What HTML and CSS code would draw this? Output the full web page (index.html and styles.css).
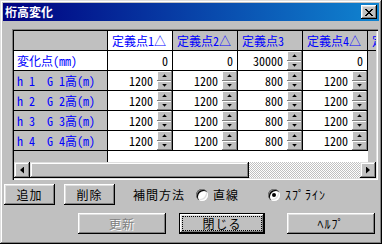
FILE: index.html
```html
<!DOCTYPE html>
<html lang="ja">
<head>
    <meta charset="UTF-8" />
    <title>桁高変化</title>
    <link rel="stylesheet" href="styles.css">
</head>
<body>
<div class="window">
    <div class="titlebar">
        <span class="title">桁高変化</span>
        <span class="close-btn">
            <svg width="8" height="7" viewBox="0 0 8 7"><path d="M0 0h2v1h-2zM6 0h2v1h-2zM1 1h2v1h-2zM5 1h2v1h-2zM2 2h4v1h-4zM3 3h2v1h-2zM2 4h4v1h-4zM1 5h2v1h-2zM5 5h2v1h-2zM0 6h2v1h-2zM6 6h2v1h-2z"/></svg>
        </span>
    </div>

    <div class="grid">
        <div class="grid-view">
            <div class="grow">
                <div class="cell fixed"></div>
                <div class="cell head current">定義点1△</div>
                <div class="cell head">定義点2△</div>
                <div class="cell head">定義点3</div>
                <div class="cell head">定義点4△</div>
                <div class="cell head">定義点5△</div>
            </div>
            <div class="grow">
                <div class="cell rowhead current">変化点(mm)</div>
                <div class="cell num"><span class="val">0</span></div>
                <div class="cell num"><span class="val">0</span></div>
                <div class="cell num spin"><span class="val">30000</span><span class="spinner"><i class="up"></i><i class="down"></i></span></div>
                <div class="cell num"><span class="val">0</span></div>
                <div class="cell off"></div>
            </div>
            <div class="grow">
                <div class="cell rowhead">h 1  G 1高(m)</div>
                <div class="cell num spin"><span class="val">1200</span><span class="spinner"><i class="up"></i><i class="down"></i></span></div>
                <div class="cell num spin"><span class="val">1200</span><span class="spinner"><i class="up"></i><i class="down"></i></span></div>
                <div class="cell num spin"><span class="val">800</span><span class="spinner"><i class="up"></i><i class="down"></i></span></div>
                <div class="cell num spin"><span class="val">1200</span><span class="spinner"><i class="up"></i><i class="down"></i></span></div>
                <div class="cell off"></div>
            </div>
            <div class="grow">
                <div class="cell rowhead">h 2  G 2高(m)</div>
                <div class="cell num spin"><span class="val">1200</span><span class="spinner"><i class="up"></i><i class="down"></i></span></div>
                <div class="cell num spin"><span class="val">1200</span><span class="spinner"><i class="up"></i><i class="down"></i></span></div>
                <div class="cell num spin"><span class="val">800</span><span class="spinner"><i class="up"></i><i class="down"></i></span></div>
                <div class="cell num spin"><span class="val">1200</span><span class="spinner"><i class="up"></i><i class="down"></i></span></div>
                <div class="cell off"></div>
            </div>
            <div class="grow">
                <div class="cell rowhead">h 3  G 3高(m)</div>
                <div class="cell num spin"><span class="val">1200</span><span class="spinner"><i class="up"></i><i class="down"></i></span></div>
                <div class="cell num spin"><span class="val">1200</span><span class="spinner"><i class="up"></i><i class="down"></i></span></div>
                <div class="cell num spin"><span class="val">800</span><span class="spinner"><i class="up"></i><i class="down"></i></span></div>
                <div class="cell num spin"><span class="val">1200</span><span class="spinner"><i class="up"></i><i class="down"></i></span></div>
                <div class="cell off"></div>
            </div>
            <div class="grow">
                <div class="cell rowhead">h 4  G 4高(m)</div>
                <div class="cell num spin"><span class="val">1200</span><span class="spinner"><i class="up"></i><i class="down"></i></span></div>
                <div class="cell num spin"><span class="val">1200</span><span class="spinner"><i class="up"></i><i class="down"></i></span></div>
                <div class="cell num spin"><span class="val">800</span><span class="spinner"><i class="up"></i><i class="down"></i></span></div>
                <div class="cell num spin"><span class="val">1200</span><span class="spinner"><i class="up"></i><i class="down"></i></span></div>
                <div class="cell off"></div>
            </div>
        </div>
        <div class="hscroll">
            <span class="sb-btn"><i class="arrow-left"></i></span>
            <span class="sb-thumb"></span>
            <span class="sb-track"></span>
            <span class="sb-btn"><i class="arrow-right"></i></span>
        </div>
    </div>

    <div class="controls">
        <div class="row1">
            <button class="btn btn-sm add">追加</button>
            <button class="btn btn-sm del">削除</button>
            <span class="label">補間方法</span>
            <label class="radio r1"><span class="radio-mark"></span>直線</label>
            <label class="radio r2"><span class="radio-mark checked"></span>ｽﾌﾟﾗｲﾝ</label>
        </div>
        <div class="row2">
            <button class="btn btn-lg update" disabled>更新</button>
            <button class="btn btn-lg default"><span class="focus">閉じる</span></button>
            <button class="btn btn-lg help">ﾍﾙﾌﾟ</button>
        </div>
    </div>
</div>
</body>
</html>
```

FILE: styles.css
```css
* { box-sizing: border-box; }
html, body { margin: 0; }
body { width: 382px; height: 244px; background: #c0c0c0; font-family: "Noto Sans CJK JP", sans-serif; font-size: 12px; overflow: hidden; }

.window {
    width: 382px; height: 244px; padding: 3px; background: #c0c0c0;
    box-shadow: inset -1px -1px #000, inset 1px 1px #dfdfdf, inset -2px -2px #808080, inset 2px 2px #fff;
}
.titlebar {
    height: 18px; display: flex; align-items: center; justify-content: space-between;
    padding: 0 2px; background: linear-gradient(to right, #000080, #1084d0);
}
.title { color: #fff; font-weight: bold; font-size: 12px; line-height: 14px; }
.close-btn {
    width: 16px; height: 14px; display: flex; align-items: center; justify-content: center; background: #c0c0c0;
    box-shadow: inset -1px -1px #000, inset 1px 1px #fff, inset -2px -2px #808080, inset 2px 2px #dfdfdf;
}
.close-btn svg { display: block; margin-top: 1px; }

/* grid */
.grid {
    margin: 8px 1px 0 9px; height: 151px; padding: 2px; background: #fff;
    box-shadow: inset 1px 1px #808080, inset 2px 2px #000, inset -1px -1px #fff, inset -2px -2px #dfdfdf;
}
.grid-view {
    height: 131px; overflow: hidden;
    background: linear-gradient(to right, #c0c0c0 93px, #000 93px 94px, #fff 94px 354px, #c0c0c0 354px);
}
.grow { display: grid; grid-template-columns: 94px repeat(5, 65px); height: 20px; }
.cell {
    height: 20px; display: flex; align-items: center; overflow: hidden; white-space: pre;
    border-right: 1px solid #000; border-bottom: 1px solid #000; background: #fff;
    font-family: "Noto Sans Mono CJK JP", "Noto Sans CJK JP", monospace; font-size: 12px; line-height: 12px;
}
.fixed, .head, .rowhead, .off { background: #c0c0c0; color: #0000ff; }
.off { border-bottom-color: #c0c0c0; }
.head { padding-left: 4px; }
.rowhead { padding-left: 3px; }
.cell.current { background: #fff; }
.num { justify-content: flex-end; padding-right: 4px; color: #000; }
.num.spin { padding-right: 0; }
.spin .val { margin-right: 4px; }
.spinner { width: 15px; height: 19px; display: flex; flex-direction: column; }
.spinner i {
    flex: 1; display: flex; align-items: center; justify-content: center; background: #c0c0c0;
    box-shadow: inset -1px -1px #808080, inset 1px 1px #fff;
}
.spinner i::after { content: ""; width: 5px; height: 3px; background: #000; }
.spinner .up::after { clip-path: polygon(50% 0, 100% 100%, 0 100%); }
.spinner .down::after { clip-path: polygon(0 0, 100% 0, 50% 100%); }

/* scrollbar */
.hscroll { display: flex; height: 16px; }
.sb-btn, .sb-thumb {
    height: 16px; background: #c0c0c0;
    box-shadow: inset -1px -1px #000, inset 1px 1px #dfdfdf, inset -2px -2px #808080, inset 2px 2px #fff;
}
.sb-btn { width: 16px; display: flex; align-items: center; justify-content: center; }
.sb-thumb { width: 219px; }
.sb-track { flex: 1; background: repeating-conic-gradient(#c0c0c0 0 25%, #fff 0 50%) 0 0 / 2px 2px; }
.arrow-left, .arrow-right { width: 4px; height: 7px; background: #000; }
.arrow-left { clip-path: polygon(100% 0, 100% 100%, 0 50%); }
.arrow-right { clip-path: polygon(0 0, 100% 50%, 0 100%); }

/* bottom controls */
.controls { font-size: 12px; letter-spacing: 1px; }
.row1 { display: flex; align-items: center; margin-top: 4px; height: 21px; }
.row2 { display: flex; align-items: center; margin-top: 8px; height: 21px; }
.btn {
    height: 21px; padding: 0; border: none; background: #c0c0c0; color: #000;
    font-family: "Noto Sans CJK JP", sans-serif; font-size: 12px; letter-spacing: 1px; line-height: 12px;
    box-shadow: inset -1px -1px #000, inset 1px 1px #fff, inset -2px -2px #808080, inset 2px 2px #dfdfdf;
}
.btn-sm { width: 51px; }
.btn-lg { width: 88px; }
.add { margin-left: 1px; }
.del { margin-left: 9px; }
.label { margin-left: 18px; }
.radio { display: flex; align-items: center; }
.r1 { margin-left: 11px; }
.r2 { margin-left: 29px; }
.radio-mark {
    width: 12px; height: 12px; border-radius: 50%; background: #fff; margin-right: 5px;
    display: flex; align-items: center; justify-content: center;
    box-shadow: inset 1px 1px #808080, inset 2px 2px #000, inset -1px -1px #fff, inset -2px -2px #dfdfdf;
}
.radio-mark.checked::after { content: ""; width: 4px; height: 4px; border-radius: 50%; background: #000; }
.update { margin-left: 75px; color: #808080; text-shadow: 1px 1px #fff; }
.default {
    margin-left: 13px; width: 86px; border: 1px solid #000;
    display: flex; align-items: center; justify-content: center;
}
.focus { display: flex; align-items: center; justify-content: center; width: 78px; height: 13px; outline: 1px dotted #000; }
.help { margin-left: 22px; }
```
